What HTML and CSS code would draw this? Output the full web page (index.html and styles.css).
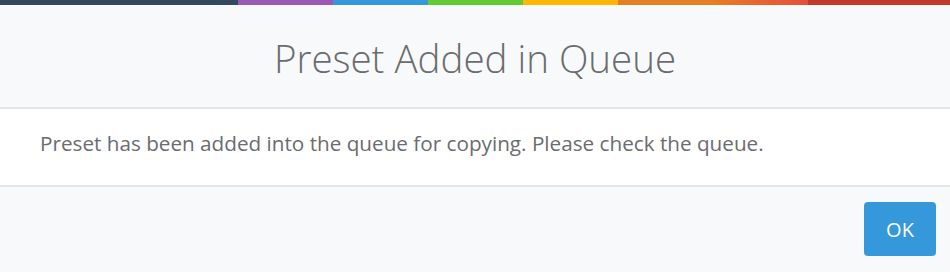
FILE: index.html
```html
<!DOCTYPE html>
<html lang="en">
<head>
<meta charset="utf-8">
<title>Preset Added in Queue</title>
<link rel="stylesheet" href="styles.css">
</head>
<body>
<div class="modal">
  <div class="color-line"></div>
  <div class="modal-header">
    <h4 class="modal-title">Preset Added in Queue</h4>
  </div>
  <div class="modal-body">
    <p>Preset has been added into the queue for copying. Please check the queue.</p>
  </div>
  <div class="modal-footer">
    <button class="btn-ok" type="button">OK</button>
  </div>
</div>
</body>
</html>
```

FILE: styles.css
```css
html, body {
  margin: 0;
  padding: 0;
  background: #f7f9fa;
}
body {
  font-family: "Open Sans", "Liberation Sans", sans-serif;
  color: #6a6c6f;
}
.modal {
  display: flex;
  flex-direction: column;
  width: 100%;
}
.color-line {
  height: 5px;
  background-image: linear-gradient(to right, #34495e, #34495e 25%, #9b59b6 25%, #9b59b6 35%, #3498db 35%, #3498db 45%, #62cb31 45%, #62cb31 55%, #ffb606 55%, #ffb606 65%, #e67e22 65%, #e67e22 75%, #e74c3c 85%, #c0392b 85%, #c0392b 100%);
}
.modal-header {
  background: #f7f9fa;
  display: flex;
  align-items: center;
  justify-content: center;
  border-bottom: 2px solid #e4e5e7;
  box-sizing: border-box;
  height: 104px;
  padding-top: 4px;
}
.modal-title {
  margin: 0;
  font-size: 38.5px;
  font-weight: 300;
  color: #6a6c6f;
  line-height: 1.1;
}
.modal-body {
  background: #ffffff;
  height: 78px;
  box-sizing: border-box;
  display: flex;
  align-items: center;
  padding: 0 40px 8px;
  border-bottom: 2px solid #e4e5e7;
}
.modal-body p {
  margin: 0;
  font-size: 20.7px;
  line-height: 1.4;
  color: #6a6c6f;
}
.modal-footer {
  display: flex;
  justify-content: flex-end;
  padding: 15px 14px;
}
.btn-ok {
  width: 72px;
  height: 54px;
  border: none;
  border-radius: 4px;
  background: #3498db;
  color: #ffffff;
  font-family: "Open Sans", "Liberation Sans", sans-serif;
  font-size: 20px;
  padding: 0;
}
```
